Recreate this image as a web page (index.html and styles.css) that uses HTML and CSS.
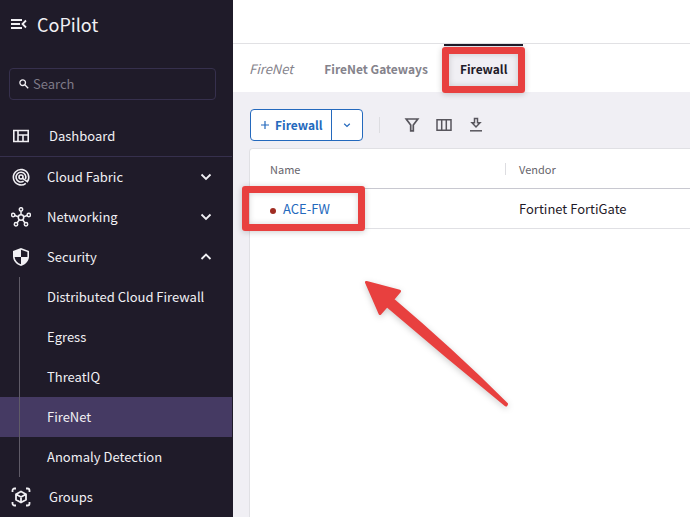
FILE: index.html
```html
<!DOCTYPE html>
<html lang="en">
<head>
<meta charset="utf-8">
<title>CoPilot</title>
<link rel="stylesheet" href="styles.css">
</head>
<body>
<div class="app">
  <aside class="sidebar">
    <header class="brand">
      <svg class="brand-icon" width="16" height="12" viewBox="0 0 16 12" fill="none" stroke="currentColor" stroke-width="1.800"><path d="M0 2h11M0 6h9M0 10h11"/><path d="M15 2.500L11.500 6 15 9.500"/></svg>
      <span>CoPilot</span>
    </header>
    <label class="search">
      <svg width="10" height="10" viewBox="0 0 10 10" fill="none" stroke="currentColor" stroke-width="1.300"><circle cx="3.700" cy="3.700" r="2.800"/><path d="M5.800 5.800L9.200 9.200"/></svg>
      <input type="search" placeholder="Search" aria-label="Search">
    </label>
    <nav class="nav">
      <a class="item item-top wide" href="#">
        <svg width="20" height="20" viewBox="0 0 20 20" fill="none" stroke="currentColor" stroke-width="1.600"><path d="M2.800 4.500h14.400v11H2.800zM7 4.500v11M7 9h10.200M12 9v6.500"/></svg>
        <span>Dashboard</span>
      </a>
      <a class="item" href="#">
        <svg width="20" height="20" viewBox="0 0 20 20" fill="none" stroke="currentColor" stroke-width="1.600"><path d="M14.800 16.300a7.700 7.700 0 1 1 1.600-1.700L10.800 10.800"/><path d="M12.600 14.200a4.900 4.900 0 1 1 1.800-2.100"/><circle cx="10" cy="10" r="2"/></svg>
        <span>Cloud Fabric</span>
        <svg class="chevron" width="12" height="12" viewBox="0 0 12 12"><path d="M1.500 3.500L6 8l4.500-4.500"/></svg>
      </a>
      <a class="item" href="#">
        <svg width="20" height="20" viewBox="0 0 20 20" fill="none" stroke="currentColor" stroke-width="1.500"><circle cx="10" cy="10.500" r="2.700"/><circle cx="10" cy="2.400" r="1.700"/><circle cx="2.200" cy="8" r="1.700"/><circle cx="17.800" cy="8" r="1.700"/><circle cx="5" cy="17.300" r="1.700"/><circle cx="15" cy="17.300" r="1.700"/><path d="M10 4v4M3.800 8.500l3.600 1.200M16.200 8.500l-3.600 1.200M8.400 12.700L6 16M11.600 12.700L14 16"/></svg>
        <span>Networking</span>
        <svg class="chevron" width="12" height="12" viewBox="0 0 12 12"><path d="M1.500 3.500L6 8l4.500-4.500"/></svg>
      </a>
      <a class="item" href="#">
        <svg width="20" height="20" viewBox="0 0 20 20"><path d="M10 1l8 3v5.500c0 4.300-3.300 8-8 9.500-4.700-1.500-8-5.200-8-9.500V4z" fill="currentColor"/><path class="shield-cut" d="M10 2.800v7.200H3.600V5.100zM10 10h6.400c-.4 3.400-3 6.100-6.400 7.300z" transform="matrix(-1 0 0 1 20 0)"/></svg>
        <span>Security</span>
        <svg class="chevron" width="12" height="12" viewBox="0 0 12 12"><path d="M1.500 8L6 3.500 10.500 8"/></svg>
      </a>
      <div class="subnav">
        <a class="sub" href="#">Distributed Cloud Firewall</a>
        <a class="sub" href="#">Egress</a>
        <a class="sub" href="#">ThreatIQ</a>
        <a class="sub current" href="#" aria-current="page">FireNet</a>
        <a class="sub" href="#">Anomaly Detection</a>
      </div>
      <a class="item wide" href="#">
        <svg width="20" height="20" viewBox="0 0 20 20" fill="none" stroke="currentColor" stroke-width="1.800"><path d="M1.500 5V3.500a2 2 0 0 1 2-2H5M15 1.500h1.500a2 2 0 0 1 2 2V5M18.500 15v1.500a2 2 0 0 1-2 2H15M5 18.500H3.500a2 2 0 0 1-2-2V15"/><path d="M10 4.500l5 2.700v5.600l-5 2.700-5-2.700V7.200zM5 7.200l5 2.800 5-2.800M10 10v5.500"/></svg>
        <span>Groups</span>
      </a>
    </nav>
  </aside>

  <main class="main">
    <div class="topbar"></div>
    <nav class="tabs">
      <a class="tab tab-first" href="#">FireNet</a>
      <a class="tab" href="#">FireNet Gateways</a>
      <a class="tab active" href="#">Firewall<span class="mark mark-tab"></span></a>
    </nav>
    <section class="content">
      <div class="toolbar">
        <div class="split">
          <button class="add" type="button"><svg width="8" height="8" viewBox="0 0 8 8" fill="none" stroke="currentColor" stroke-width="1.200"><path d="M4 0v8M0 4h8"/></svg>Firewall</button>
          <button class="more" type="button" aria-label="More"><svg width="8" height="8" viewBox="0 0 8 8" fill="none" stroke="currentColor" stroke-width="1.200"><path d="M1.200 2.800L4 5.500l2.800-2.700"/></svg></button>
        </div>
        <span class="divider"></span>
        <div class="tools">
          <button class="tool" type="button" aria-label="Filter"><svg width="16" height="16" viewBox="0 0 16 16" fill="none" stroke="currentColor" stroke-width="1.700"><path d="M2.200 2h11.600L9.300 8v5.800H6.700V8z"/></svg></button>
          <button class="tool" type="button" aria-label="Columns"><svg width="16" height="16" viewBox="0 0 16 16" fill="none" stroke="currentColor" stroke-width="1.500"><path d="M1 2.800h14v10.400H1zM5.700 2.800v10.400M10.300 2.800v10.400"/></svg></button>
          <button class="tool" type="button" aria-label="Download"><svg width="16" height="16" viewBox="0 0 16 16" fill="none" stroke="currentColor" stroke-width="1.500"><path d="M6.500 1.500h3v4.300H12L8 10 4 5.800h2.500z"/><path d="M2 13.800h12"/></svg></button>
        </div>
      </div>
      <div class="card">
        <table class="grid">
          <thead><tr><th class="name-col">Name</th><th><span class="vendor">Vendor</span></th></tr></thead>
          <tbody><tr>
            <td class="name-col"><span class="status"></span><a class="link" href="#">ACE-FW</a><span class="mark mark-row"></span></td>
            <td>Fortinet FortiGate</td>
          </tr></tbody>
        </table>
        <svg class="arrow" width="150" height="134" viewBox="0 0 150 134"><path d="M3.500 3.500L36.500 12.300 29.500 20.500Q88 70 143.500 125L143 126Q83 77 24 26.500L17 34.500Z"/></svg>
      </div>
    </section>
  </main>
</div>
</body>
</html>
```

FILE: styles.css
```css
* { box-sizing: border-box; }

body {
  margin: 0;
  font: 13px/20px "Noto Sans CJK SC", "Open Sans", sans-serif;
  color: #1f1b29;
  background: #fff;
}

a { color: inherit; text-decoration: none; }
button { font: inherit; margin: 0; padding: 0; border: 0; background: none; }
svg { display: block; flex: none; }

.app { display: flex; min-height: 100vh; }

.sidebar {
  flex: none;
  width: 233px;
  height: 100vh;
  overflow: hidden;
  padding-right: 1px;
  background: #1f1b29;
  color: #f1f0f4;
}

.brand {
  display: flex;
  align-items: center;
  gap: 10px;
  height: 48px;
  padding-left: 11px;
  font-size: 18px;
}

.search {
  display: flex;
  align-items: center;
  gap: 4px;
  height: 32px;
  margin: 20px 16px 16px 9px;
  padding: 0 9px;
  border: 1px solid #36304d;
  border-radius: 4px;
}
.search input {
  flex: 1;
  min-width: 0;
  padding: 0;
  border: 0;
  outline: 0;
  background: none;
  color: inherit;
  font: inherit;
}
.search input::placeholder { color: #7d7986; }

.item {
  display: flex;
  align-items: center;
  gap: 16px;
  height: 40px;
  padding: 0 20px 0 11px;
}
.wide { gap: 18px; }
.item-top { height: 41px; border-bottom: 1px solid #36304d; }
.chevron {
  margin-left: auto;
  fill: none;
  stroke: currentColor;
  stroke-width: 1.8;
}
.shield-cut { fill: #1f1b29; }

.subnav { position: relative; }
.subnav::before {
  content: "";
  position: absolute;
  inset: 0 auto 0 19px;
  width: 1px;
  background: #5f5b67;
}
.sub { display: flex; align-items: center; height: 40px; padding-left: 47px; }
.current { background: #453a63; }

.main { flex: 1; min-width: 0; display: flex; flex-direction: column; }
.topbar { height: 44px; border-bottom: 1px solid #e1e1e4; }

.tabs { display: flex; height: 48px; font-size: 12px; font-weight: 700; color: #85838c; }
.tab { position: relative; padding: 15px 16px 0; }
.tab-first { margin-right: -1px; font-size: 13px; font-style: italic; font-weight: 400; }
.active { background: #f0eff4; border-top: 2px solid #1f1b29; padding-top: 13px; color: #1f1b29; }

.content {
  flex: 1;
  display: flex;
  flex-direction: column;
  gap: 7px;
  padding: 17px 0 0 16px;
  background: #f0eff4;
}

.toolbar { display: flex; align-items: center; }
.split {
  display: flex;
  height: 32px;
  margin-left: 1px;
  border: 1px solid #2469bd;
  border-radius: 4px;
  background: #fff;
  color: #2469bd;
}
.add { display: flex; align-items: center; gap: 6px; padding: 0 8px 0 10px; font-size: 12px; font-weight: 700; color: inherit; }
.more { display: grid; place-items: center; width: 31px; border-left: 1px solid #2469bd; color: inherit; }
.divider { width: 1px; height: 16px; margin: 0 24px 0 16px; background: #dddde1; }
.tools { display: flex; gap: 16px; }
.tool { color: #57555c; }

.card {
  position: relative;
  flex: 1;
  border: 1px solid #e0e0e4;
  border-width: 1px 0 0 1px;
  border-radius: 4px 0 0 0;
  background: #fff;
}
.grid { width: 100%; border-collapse: separate; border-spacing: 0; table-layout: fixed; }
.grid th {
  height: 40px;
  padding: 0;
  border-bottom: 1px solid #c8c8d0;
  font-size: 11px;
  font-weight: 400;
  text-align: left;
  color: #66646c;
}
.grid td { position: relative; height: 40px; padding: 0 0 0 14px; border-bottom: 1px solid #e0e0e4; }
.grid .name-col { width: 255px; padding-left: 20px; }
.vendor { display: flex; align-items: center; gap: 13px; }
.vendor::before { content: ""; width: 1px; height: 12px; background: #dddde1; }
.status { display: inline-block; width: 6px; height: 6px; margin-right: 7px; border-radius: 50%; background: #a02c22; }
.link { color: #2469bd; }

.mark {
  position: absolute;
  border: 7px solid #e8403f;
  border-radius: 3px;
  box-shadow: 0 1px 6px rgba(0, 0, 0, .2), inset 0 0 6px rgba(0, 0, 0, .16);
  pointer-events: none;
}
.mark-tab { inset: 1px -2px -1px; }
.mark-row { left: -8px; top: -3px; width: 123px; height: 45px; }

.arrow {
  position: absolute;
  left: 113px;
  top: 130px;
  fill: #e8403f;
  stroke: #e8403f;
  stroke-width: 3;
  stroke-linejoin: round;
  filter: drop-shadow(0 2px 3px rgba(0, 0, 0, .2));
}
```
